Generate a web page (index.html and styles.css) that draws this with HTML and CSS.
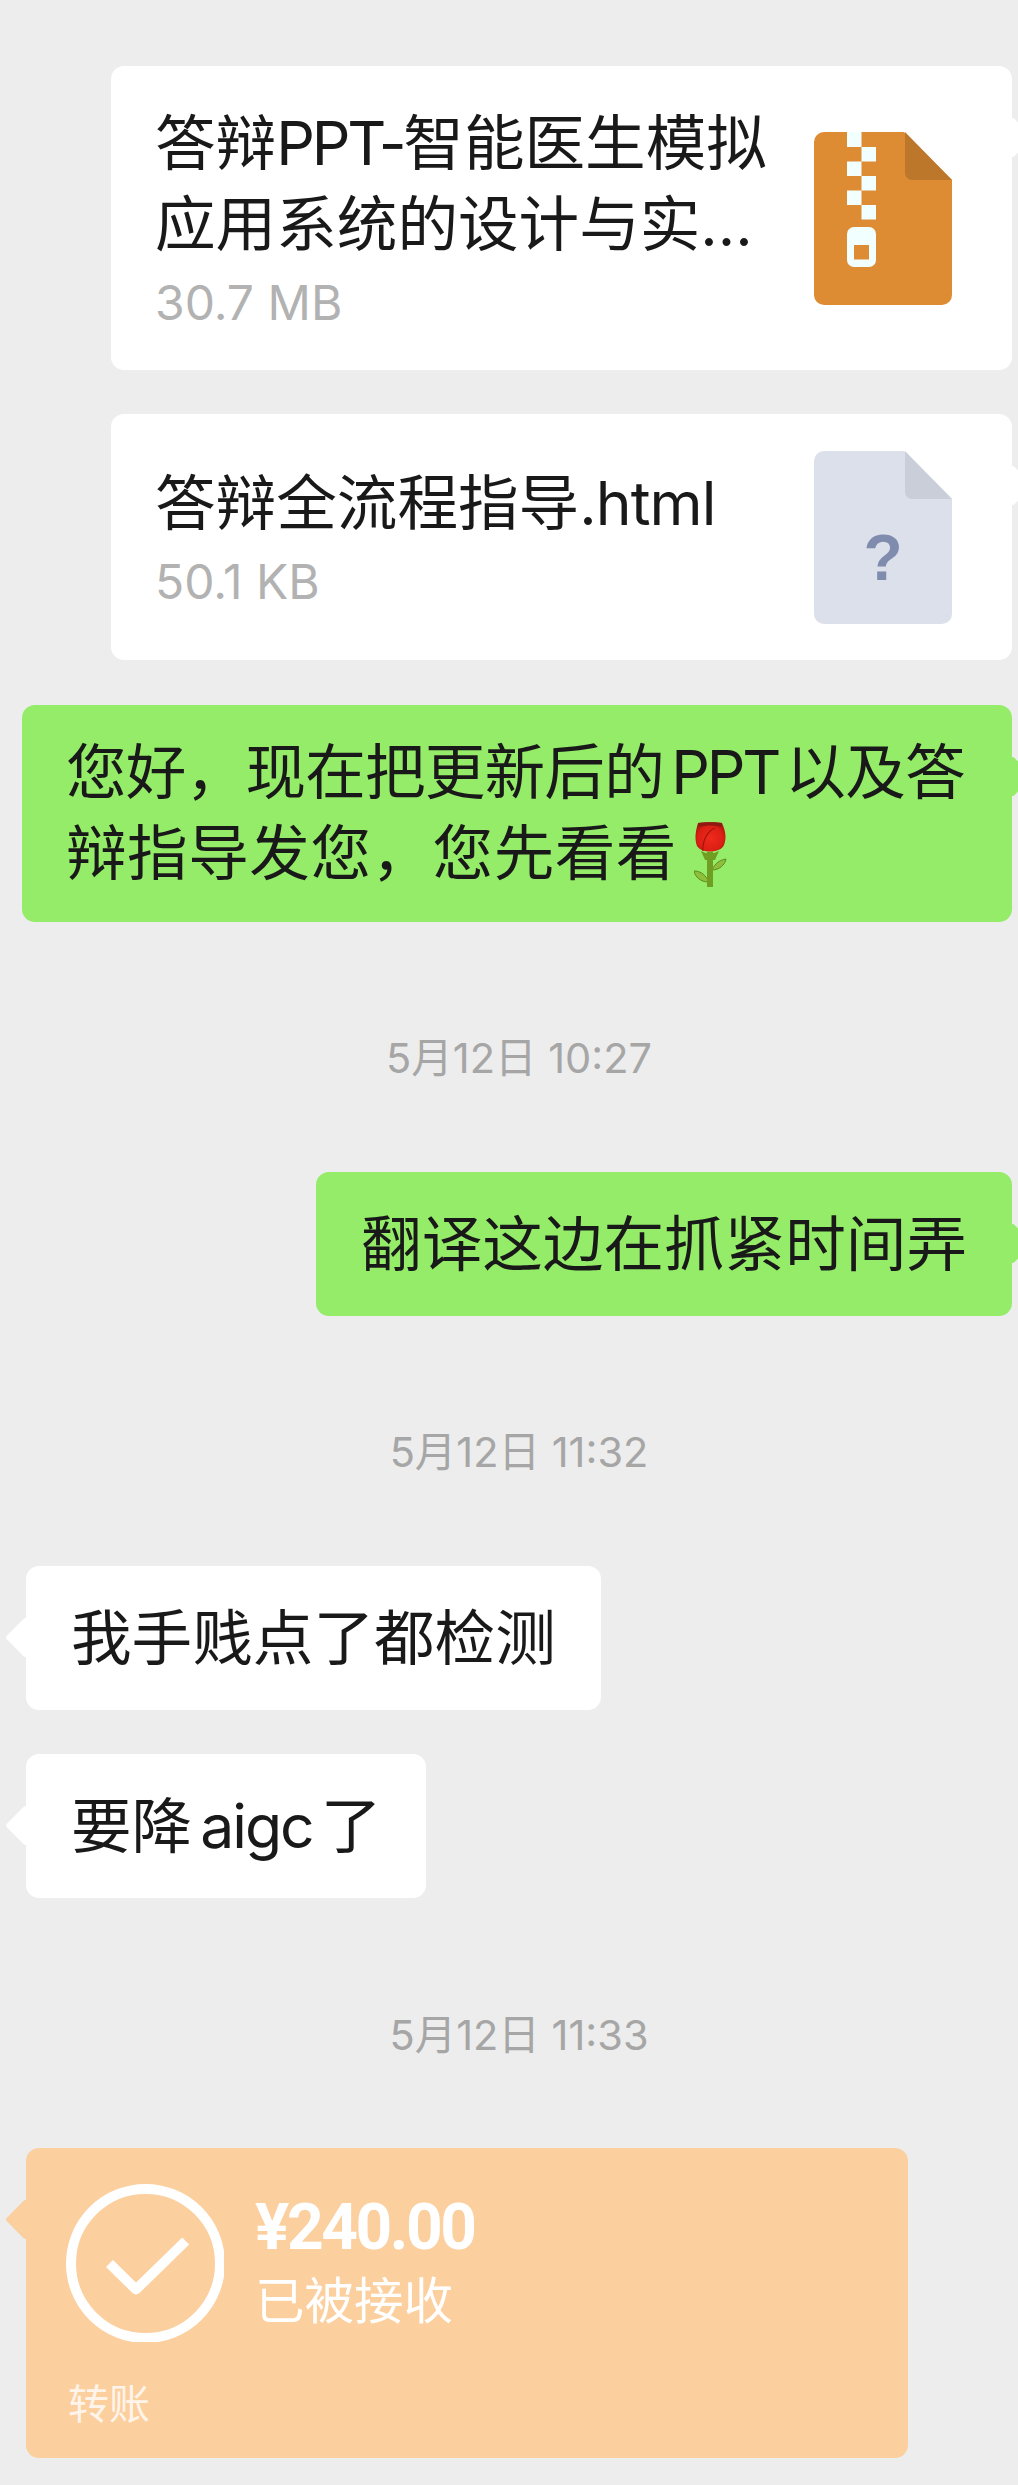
FILE: index.html
```html
<!DOCTYPE html>
<html lang="zh-CN">
<head>
<meta charset="utf-8">
<title>聊天记录</title>
<link rel="stylesheet" href="styles.css">
</head>
<body>
<main class="chat">
  <div class="row row-right">
    <article class="bubble bubble-white tail-right file-card file-card-zip">
      <div class="file-text">
        <div class="file-title">答辩<span class="latin">PPT-</span>智能医生模拟<br>应用系统的设计与实...</div>
        <div class="file-size">30.7 MB</div>
      </div>
      <svg class="file-icon" viewBox="0 0 138 173" aria-hidden="true">
        <path class="zip-body" d="M10 0H90L138 48V163A10 10 0 0 1 128 173H10A10 10 0 0 1 0 163V10A10 10 0 0 1 10 0Z"/>
        <path class="zip-fold" d="M91 0L138 48H98A7 7 0 0 1 91 41Z"/>
        <g class="zip-teeth">
          <rect x="33" y="0" width="14.5" height="15"/>
          <rect x="47.5" y="15" width="14.5" height="14.5"/>
          <rect x="33" y="29.5" width="14.5" height="14.5"/>
          <rect x="47.5" y="44" width="14.5" height="14.5"/>
          <rect x="33" y="58.5" width="14.5" height="14.5"/>
          <rect x="47.5" y="73" width="14.5" height="14.5"/>
          <rect x="33" y="95" width="29" height="40" rx="7"/>
        </g>
        <rect class="zip-body" x="40" y="113" width="15" height="14.5"/>
      </svg>
    </article>
  </div>

  <div class="row row-right row-gap-44">
    <article class="bubble bubble-white tail-right file-card file-card-unknown">
      <div class="file-text">
        <div class="file-title">答辩全流程指导<span class="latin-file">.html</span></div>
        <div class="file-size">50.1 KB</div>
      </div>
      <svg class="file-icon" viewBox="0 0 138 173" aria-hidden="true">
        <path class="doc-body" d="M10 0H90L138 48V163A10 10 0 0 1 128 173H10A10 10 0 0 1 0 163V10A10 10 0 0 1 10 0Z"/>
        <path class="doc-fold" d="M91 0L138 48H98A7 7 0 0 1 91 41Z"/>
        <text class="doc-mark" x="69" y="129" text-anchor="middle">?</text>
      </svg>
    </article>
  </div>

  <div class="row row-right row-gap-45">
    <div class="bubble bubble-green tail-right text-bubble text-wide"><span class="squeeze">您好，现在把更新后的 <span class="latin">PPT</span> 以及答</span><br>辩指导发您，您先看看<svg class="rose" viewBox="0 0 33 66" aria-hidden="true">
        <defs>
          <radialGradient id="petal" cx="0.5" cy="0.55" r="0.6">
            <stop offset="0" stop-color="#ee2a1c"/>
            <stop offset="0.7" stop-color="#dc1f14"/>
            <stop offset="1" stop-color="#a3140d"/>
          </radialGradient>
        </defs>
        <path class="rose-leaf" d="M14 58C10 51 5 49 0 49 1 55 7 60 14 60Z"/>
        <path class="rose-leaf" d="M18 48C21 41 26 38 32 37 31 43 25 48 18 48Z"/>
        <rect class="rose-stem" x="13" y="30" width="6" height="35"/>
        <path class="rose-stem" d="M7 29Q16 34 25 29L21 38H11Z"/>
        <path fill="url(#petal)" d="M4 1C10 0 23 0 28 1 31 8 33 15 30 23 27 31 8 32 3 24 0 16 2 8 4 1Z"/>
        <path class="rose-shade" d="M4 1C10 0 23 0 28 1L27 5C20 3 12 3 5 5Z"/>
        <path class="rose-crease" d="M9 29C8 20 13 9 21 6"/>
      </svg></div>
  </div>

  <div class="time time-a">5月12日 10:27</div>

  <div class="row row-right">
    <div class="bubble bubble-green tail-right text-bubble">翻译这边在抓紧时间弄</div>
  </div>

  <div class="time time-a">5月12日 11:32</div>

  <div class="row">
    <div class="bubble bubble-white tail-left text-bubble">我手贱点了都检测</div>
  </div>

  <div class="row row-gap-44">
    <div class="bubble bubble-white tail-left text-bubble">要降 <span class="latin-soft">aigc</span> 了</div>
  </div>

  <div class="time time-b">5月12日 11:33</div>

  <div class="row">
    <article class="bubble bubble-orange tail-left transfer">
      <div class="transfer-main">
        <svg class="transfer-check" viewBox="0 0 158 158" aria-hidden="true">
          <circle cx="79.5" cy="79.5" r="74.5"/>
          <path d="M43.5 79.5L70 105.5L119.7 57"/>
        </svg>
        <div class="transfer-text">
          <div class="transfer-amount">¥240.00</div>
          <div class="transfer-state">已被接收</div>
        </div>
      </div>
      <div class="transfer-label">转账</div>
    </article>
  </div>
</main>
</body>
</html>
```

FILE: styles.css
```css
* {
  box-sizing: border-box;
}

html,
body {
  margin: 0;
  padding: 0;
  background: #ededed;
  overflow-x: hidden;
}

body {
  font-family: Inter, "Noto Sans CJK SC", sans-serif;
  color: #191919;
}

.chat {
  display: flex;
  flex-direction: column;
  width: 1018px;
  height: 2485px;
  padding: 66px 6px 0 26px;
  overflow: hidden;
}

.row {
  display: flex;
}

.row-right {
  justify-content: flex-end;
}

.row-gap-44 {
  margin-top: 44px;
}

.row-gap-45 {
  margin-top: 45px;
}

.bubble {
  position: relative;
  flex: none;
  border-radius: 13px;
}

.bubble::after {
  content: "";
  position: absolute;
  top: 57px;
  width: 29px;
  height: 29px;
  border-radius: 3px;
  background: inherit;
  transform: rotate(45deg);
}

.tail-left::after {
  left: -15px;
}

.tail-right::after {
  right: -15px;
}

.bubble-white {
  background: #fff;
}

.bubble-green {
  background: #95ec69;
}

.bubble-orange {
  background: #fccf9f;
}

.text-bubble {
  padding: 31px 45px;
  font-size: 60.6px;
  line-height: 82px;
  white-space: nowrap;
  word-spacing: -9px;
}

.text-wide {
  width: 990px;
  padding: 27px 44px 28px;
  line-height: 81px;
  letter-spacing: 0.5px;
}

.squeeze {
  letter-spacing: -0.8px;
}

.latin {
  letter-spacing: -3.2px;
}

.latin-file {
  letter-spacing: -0.9px;
}

.latin-soft {
  letter-spacing: -2px;
}

.rose {
  display: inline-block;
  width: 33px;
  height: 66px;
  margin-left: 17px;
  vertical-align: -13px;
}

.rose-leaf {
  fill: #8fbf3a;
  stroke: #5c8a22;
  stroke-width: 1;
}

.rose-stem {
  fill: #6f9e23;
}

.rose-shade {
  fill: #8e1a12;
}

.rose-crease {
  fill: none;
  stroke: #a3140d;
  stroke-width: 1.2;
}

.file-card {
  display: flex;
  align-items: center;
  justify-content: space-between;
  width: 901px;
  padding: 0 60px 0 44px;
}

.file-card-zip {
  height: 304px;
}

.file-card-unknown {
  height: 246px;
}

.file-title {
  font-size: 60.6px;
  line-height: 81px;
  white-space: nowrap;
}

.file-size {
  margin-top: 8px;
  font-size: 48px;
  line-height: 60px;
  color: #b2b2b2;
}

.file-icon {
  flex: none;
  width: 138px;
  height: 173px;
}

.zip-body {
  fill: #de8c33;
}

.zip-fold {
  fill: #bd772b;
}

.zip-teeth {
  fill: #f2ffff;
}

.doc-body {
  fill: #dce0ea;
}

.doc-fold {
  fill: #c9ced9;
}

.doc-mark {
  font-family: "Liberation Sans", sans-serif;
  font-size: 64px;
  font-weight: 700;
  fill: #7f8cae;
}

.time {
  height: 60px;
  font-size: 41.5px;
  line-height: 60px;
  text-align: center;
  color: #a6a6a6;
}

.time-a {
  margin: 106px 0 84px;
}

.time-b {
  margin: 107px 0 83px;
}

.transfer {
  display: flex;
  flex-direction: column;
  width: 882px;
  height: 310px;
  padding: 36px 40px 0;
  color: #fff;
}

.transfer-main {
  display: flex;
  gap: 31px;
}

.transfer-check {
  flex: none;
  width: 158px;
  height: 158px;
}

.transfer-check circle,
.transfer-check path {
  fill: none;
  stroke: #fff;
  stroke-width: 10;
  stroke-linejoin: round;
}

.transfer-amount {
  margin-top: 9px;
  font-family: Roboto, sans-serif;
  font-size: 64px;
  font-weight: 700;
  line-height: 70px;
  letter-spacing: -2.4px;
}

.transfer-state {
  margin-top: 6px;
  font-size: 49.5px;
  line-height: 64px;
  white-space: nowrap;
}

.transfer-label {
  margin-top: 34px;
  padding-left: 2px;
  font-size: 41px;
  line-height: 56px;
  color: rgba(255, 255, 255, 0.8);
}
```
